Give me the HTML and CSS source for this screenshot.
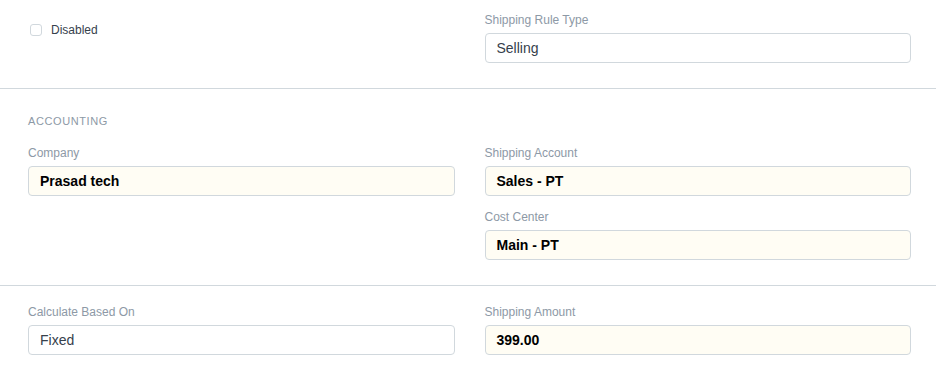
FILE: index.html
```html
<!DOCTYPE html>
<html lang="en">
<head>
  <meta charset="UTF-8" />
  <meta name="viewport" content="width=device-width, initial-scale=1.0" />
  <title>Shipping Rule</title>
  <link rel="stylesheet" href="styles.css">
</head>
<body>
  <div class="form-layout">
    <div class="form-section first">
      <div class="section-body">
        <div class="form-column">
          <div class="checkbox-field">
            <label><span class="check-box"></span> Disabled</label>
          </div>
        </div>
        <div class="form-column">
          <div class="form-group">
            <div class="control-label">Shipping Rule Type</div>
            <div class="control-input">Selling</div>
          </div>
        </div>
      </div>
    </div>

    <div class="form-section">
      <div class="section-head">Accounting</div>
      <div class="section-body">
        <div class="form-column">
          <div class="form-group">
            <div class="control-label">Company</div>
            <div class="control-input bold">Prasad tech</div>
          </div>
        </div>
        <div class="form-column">
          <div class="form-group">
            <div class="control-label">Shipping Account</div>
            <div class="control-input bold">Sales - PT</div>
          </div>
          <div class="form-group">
            <div class="control-label">Cost Center</div>
            <div class="control-input bold">Main - PT</div>
          </div>
        </div>
      </div>
    </div>

    <div class="form-section">
      <div class="section-body">
        <div class="form-column">
          <div class="form-group">
            <div class="control-label">Calculate Based On</div>
            <div class="control-input">Fixed</div>
          </div>
        </div>
        <div class="form-column">
          <div class="form-group">
            <div class="control-label">Shipping Amount</div>
            <div class="control-input bold">399.00</div>
          </div>
        </div>
      </div>
    </div>
  </div>
</body>
</html>
```

FILE: styles.css
```css
body {
  font-family: 'Liberation Sans', Arial, sans-serif;
  margin: 0;
  background: white;
  color: #36414c;
}
.form-section {
  padding: 18px 25px 12px 28px;
  border-bottom: 1px solid #d1d8dd;
}
.form-section.first {
  padding-top: 12px;
}
.form-section:last-child {
  border-bottom: none;
}
.section-head {
  margin: 6px 0 16px;
  font-size: 11px;
  line-height: 16px;
  letter-spacing: 0.6px;
  text-transform: uppercase;
  color: #8d99a6;
}
.section-body {
  display: grid;
  grid-template-columns: 1fr 1fr;
  column-gap: 30px;
}
.form-group {
  margin-bottom: 13px;
}
.control-label {
  font-size: 12px;
  line-height: 16px;
  color: #8d99a6;
  margin-bottom: 5px;
}
.control-input {
  height: 30px;
  box-sizing: border-box;
  padding: 0 11px;
  border: 1px solid #d1d8dd;
  border-radius: 4px;
  font-size: 14px;
  line-height: 28px;
  color: #36414c;
  background: white;
}
.control-input.bold {
  font-weight: bold;
  color: #000;
  background: #fffdf4;
}
.checkbox-field {
  margin-top: 10px;
}
.checkbox-field label {
  display: flex;
  align-items: center;
  gap: 9px;
  font-size: 12px;
  line-height: 16px;
  color: #36414c;
  padding-left: 2px;
}
.check-box {
  width: 10px;
  height: 10px;
  border: 1px solid #d1d8dd;
  border-radius: 3px;
}
```
